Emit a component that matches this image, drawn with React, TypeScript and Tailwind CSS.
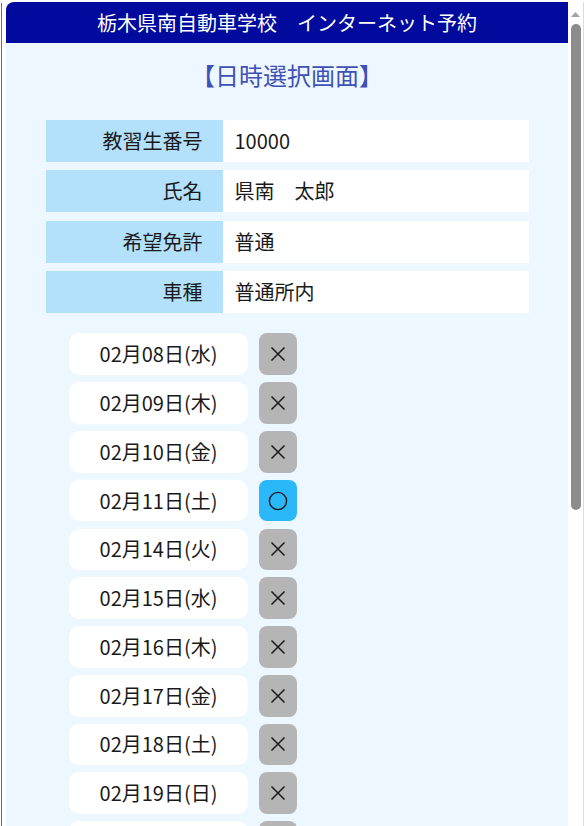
import { useState } from 'react'

const student = [
  { label: '教習生番号', value: '10000' },
  { label: '氏名', value: '県南　太郎' },
  { label: '希望免許', value: '普通' },
  { label: '車種', value: '普通所内' },
]

const dates = [
  { day: '02月08日(水)', open: false },
  { day: '02月09日(木)', open: false },
  { day: '02月10日(金)', open: false },
  { day: '02月11日(土)', open: true },
  { day: '02月14日(火)', open: false },
  { day: '02月15日(水)', open: false },
  { day: '02月16日(木)', open: false },
  { day: '02月17日(金)', open: false },
  { day: '02月18日(土)', open: false },
  { day: '02月19日(日)', open: false },
  { day: '02月20日(月)', open: false },
  { day: '02月21日(火)', open: false },
]

function Scrollbar() {
  return (
    <div className="flex w-[15px] flex-col items-center bg-white pt-[12px]">
      <svg width="9" height="5" viewBox="0 0 9 5">
        <polygon points="0,5 4.5,0 9,5" fill="#a3a3a3" />
      </svg>
      <div className="mt-[7px] h-[486px] w-[10px] rounded-full bg-[#8c8c8c]" />
    </div>
  )
}

export default function App() {
  const [picked, setPicked] = useState<string | null>(null)

  return (
    <div
      className="flex h-[826px] w-[586px] overflow-hidden bg-white text-[#1a1a1a]"
      style={{ fontFamily: '"Noto Sans CJK JP", "Noto Sans", sans-serif' }}
    >
      <div className="ml-[1px] mt-[3px] w-[1px] bg-[#6e6e6e]" />
      <div className="w-[4px]" />

      <div className="flex w-[562px] flex-col pt-[2px]">
        <div className="flex h-[41px] items-center justify-center rounded-tl-[8px] bg-[#000a9c] text-[20px] leading-none text-white">
          栃木県南自動車学校　インターネット予約
        </div>

        <div className="flex-1 overflow-hidden bg-[#ecf7ff]">
          <h1 className="mt-[14px] text-center text-[24px] leading-[36px] text-[#3f51b5]">【日時選択画面】</h1>

          <div className="mx-auto mt-[27px] flex w-[483px] flex-col gap-[8.3px]">
            {student.map((row) => (
              <div key={row.label} className="flex h-[42px] text-[20px]">
                <div className="flex w-[177px] items-center justify-end bg-[#b3e1fb] pr-[20px]">{row.label}</div>
                <div className="flex flex-1 items-center bg-white pl-[12px]">{row.value}</div>
              </div>
            ))}
          </div>

          <ul className="mt-[20.5px] flex flex-col gap-[7.1px] pl-[63px]">
            {dates.map((d) => (
              <li key={d.day} className="flex h-[41.7px] items-stretch gap-[11px]">
                <div className="flex w-[179px] items-center justify-center rounded-[10px] bg-white text-[20px]">
                  {d.day}
                </div>
                <button
                  type="button"
                  onClick={() => d.open && setPicked(d.day)}
                  className={
                    d.open
                      ? 'flex w-[38px] items-center justify-center rounded-[8px] bg-[#2bb8fa] text-[22px]'
                      : 'flex w-[38px] items-center justify-center rounded-[8px] bg-[#b5b5b5] text-[22px]'
                  }
                  aria-pressed={picked === d.day}
                >
                  {d.open ? (
                    <svg width="20" height="20" viewBox="0 0 20 20">
                      <circle cx="10" cy="10" r="8.6" fill="none" stroke="#1a1a1a" strokeWidth="1.4" />
                    </svg>
                  ) : (
                    <svg width="16" height="16" viewBox="0 0 16 16">
                      <path d="M1.5 1.5 L14.5 14.5 M14.5 1.5 L1.5 14.5" stroke="#1a1a1a" strokeWidth="1.5" />
                    </svg>
                  )}
                </button>
              </li>
            ))}
          </ul>
        </div>
      </div>

      <Scrollbar />
      <div className="mt-[2px] w-[1px] rounded-tr-[6px] bg-[#dcdcdc]" />
    </div>
  )
}
